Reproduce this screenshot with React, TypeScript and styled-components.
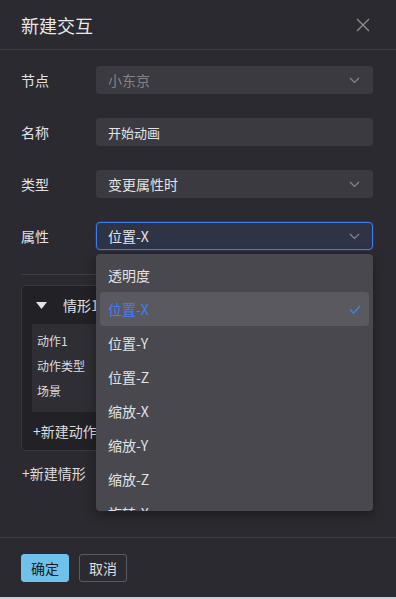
import styled, { createGlobalStyle } from "styled-components";

const Global = createGlobalStyle`
  html, body {
    margin: 0;
    padding: 0;
    background: #c9d0d7;
  }
  body {
    font-family: "Noto Sans CJK SC", "Noto Sans", sans-serif;
  }
  * { box-sizing: border-box; }
`;

const Dialog = styled.div`
  width: 396px;
  height: 597px;
  background: #2b2a30;
  color: #e2e2e4;
  display: flex;
  flex-direction: column;
  position: relative;
`;

const Header = styled.div`
  height: 50px;
  flex: none;
  display: flex;
  align-items: center;
  justify-content: space-between;
  padding: 0 26px 0 21px;
  border-bottom: 1px solid #3f3e44;
`;

const Title = styled.div`
  font-size: 18px;
  color: #e8e8ea;
  line-height: 1;
`;

const CloseButton = styled.button`
  background: none;
  border: 0;
  padding: 0;
  width: 14px;
  height: 14px;
  display: flex;
  color: #8e8e93;
`;

const Body = styled.div`
  flex: 1;
  padding: 16px 23px 0 21px;
  display: flex;
  flex-direction: column;
`;

const Row = styled.div`
  display: grid;
  grid-template-columns: 75px 1fr;
  align-items: center;
  height: 28px;
  margin-bottom: 24px;
  position: relative;
`;

const Label = styled.div`
  font-size: 14px;
  color: #e2e2e4;
`;

const Field = styled.div<{ $focused?: boolean; $disabled?: boolean }>`
  height: 28px;
  border-radius: 4px;
  display: flex;
  align-items: center;
  justify-content: space-between;
  padding: 0 12px 0 11px;
  font-size: 14px;
  background: ${(p) => (p.$focused ? "#2e3446" : "#3b3a40")};
  border: 1px solid ${(p) => (p.$focused ? "#3d7ef2" : "transparent")};
  color: ${(p) => (p.$disabled ? "#838387" : "#e4e4e6")};
  box-shadow: ${(p) => (p.$focused ? "0 0 0 1px rgba(61,126,242,0.15)" : "none")};
`;

const Chevron = () => (
  <svg width="11" height="7" viewBox="0 0 11 7" fill="none">
    <path d="M1 1l4.5 4.5L10 1" stroke="#86868c" strokeWidth="1.2" />
  </svg>
);

const Divider = styled.div`
  height: 1px;
  background: #3f3e44;
  margin: 0 0 10px 0;
`;

const Case = styled.div`
  background: #222126;
  border: 1px solid #38373d;
  border-radius: 4px;
  padding: 0 10px 0 10px;
  height: 166px;
`;

const CaseHead = styled.div`
  height: 38px;
  display: flex;
  align-items: center;
  padding-left: 4px;
  gap: 16px;
  font-size: 14px;
  color: #e2e2e4;
`;

const Actions = styled.div`
  background: #2f2e34;
  padding: 4px 5px;
  height: 88px;
  display: flex;
  flex-direction: column;
`;

const ActionItem = styled.div`
  font-size: 12px;
  line-height: 25px;
  color: #dcdcde;
`;

const AddLink = styled.div<{ $inset?: boolean }>`
  font-size: 14px;
  color: #dcdcde;
  height: ${(p) => (p.$inset ? "37px" : "auto")};
  display: flex;
  align-items: center;
  margin-left: 1px;
`;

const AddCase = styled(AddLink)`
  margin-top: 12px;
`;

const Menu = styled.div`
  position: absolute;
  left: 75px;
  right: 0;
  top: 32px;
  height: 257px;
  background: #49484e;
  border-radius: 4px;
  padding: 4px 4px 0 4px;
  overflow: hidden;
  z-index: 10;
  box-shadow: 0 4px 12px rgba(0, 0, 0, 0.35);
`;

const Option = styled.div<{ $selected?: boolean }>`
  height: 34px;
  border-radius: 4px;
  display: flex;
  align-items: center;
  justify-content: space-between;
  padding: 0 8px 0 8px;
  font-size: 14px;
  background: ${(p) => (p.$selected ? "#5a595f" : "transparent")};
  color: ${(p) => (p.$selected ? "#3f80f2" : "#e2e2e4")};
`;

const Footer = styled.div`
  height: 60px;
  flex: none;
  border-top: 1px solid #3f3e44;
  display: flex;
  align-items: center;
  gap: 10px;
  padding: 0 21px;
`;

const Button = styled.button<{ $primary?: boolean }>`
  height: 28px;
  width: 48px;
  border-radius: 3px;
  font-family: inherit;
  font-size: 14px;
  padding: 0;
  background: ${(p) => (p.$primary ? "#6ec1ea" : "transparent")};
  border: 1px solid ${(p) => (p.$primary ? "#6ec1ea" : "#5c5b61")};
  color: ${(p) => (p.$primary ? "#1c1c20" : "#dedee0")};
`;

const options = ["透明度", "位置-X", "位置-Y", "位置-Z", "缩放-X", "缩放-Y", "缩放-Z", "旋转-X"];

export default function App() {
  return (
    <>
      <Global />
      <Dialog>
        <Header>
          <Title>新建交互</Title>
          <CloseButton aria-label="关闭">
            <svg width="14" height="14" viewBox="0 0 14 14">
              <path d="M1 1l12 12M13 1L1 13" stroke="#8e8e93" strokeWidth="1.3" />
            </svg>
          </CloseButton>
        </Header>
        <Body>
          <Row>
            <Label>节点</Label>
            <Field $disabled>
              <span>小东京</span>
              <Chevron />
            </Field>
          </Row>
          <Row>
            <Label>名称</Label>
            <Field>
              <span style={{ fontSize: 13 }}>开始动画</span>
            </Field>
          </Row>
          <Row>
            <Label>类型</Label>
            <Field>
              <span>变更属性时</span>
              <Chevron />
            </Field>
          </Row>
          <Row>
            <Label>属性</Label>
            <Field $focused>
              <span>位置-X</span>
              <Chevron />
            </Field>
            <Menu>
              {options.map((o) => (
                <Option key={o} $selected={o === "位置-X"}>
                  <span>{o}</span>
                  {o === "位置-X" && (
                    <svg width="12" height="9" viewBox="0 0 12 9" fill="none">
                      <path d="M1 4.5l3.5 3.5L11 1" stroke="#3f80f2" strokeWidth="1.3" />
                    </svg>
                  )}
                </Option>
              ))}
            </Menu>
          </Row>
          <Divider />
          <Case>
            <CaseHead>
              <svg width="11" height="7" viewBox="0 0 11 7">
                <path d="M0 0h11L5.5 7z" fill="#e2e2e4" />
              </svg>
              <span>情形1</span>
            </CaseHead>
            <Actions>
              <ActionItem>动作1</ActionItem>
              <ActionItem>动作类型</ActionItem>
              <ActionItem>场景</ActionItem>
            </Actions>
            <AddLink $inset>+新建动作</AddLink>
          </Case>
          <AddCase>+新建情形</AddCase>
        </Body>
        <Footer>
          <Button $primary>确定</Button>
          <Button>取消</Button>
        </Footer>
      </Dialog>
    </>
  );
}
